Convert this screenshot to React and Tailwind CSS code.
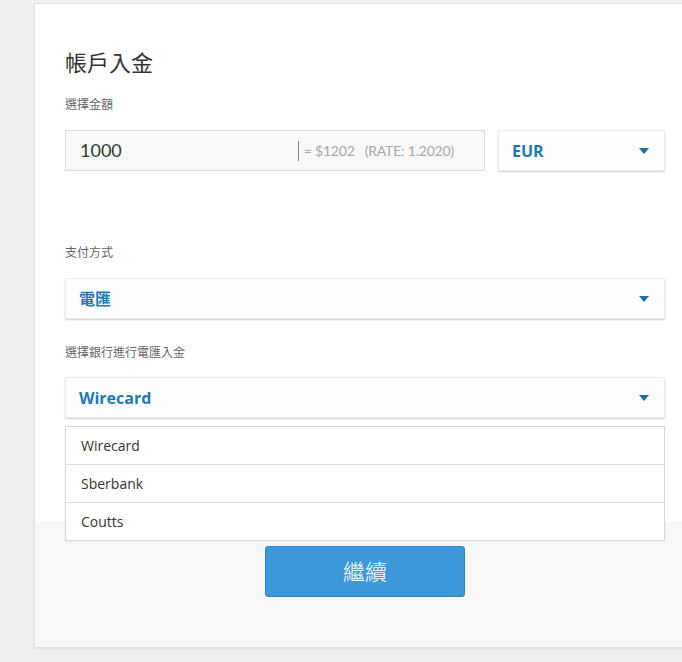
import { useState } from "react";

const sans = "font-['Open_Sans','Noto_Sans_CJK_TC',sans-serif]";

const Caret = () => (
  <svg width="10" height="6" viewBox="0 0 10 6" className="shrink-0">
    <path d="M0 0h10L5 6z" fill="#1c6fa3" />
  </svg>
);

const SelectBox = ({ value, className = "" }) => (
  <div className={`flex items-center justify-between h-[41px] pl-[13px] pr-[15px] bg-[#fdfdfd] border border-[#ececec] rounded-[2px] shadow-[0_1px_2px_rgba(0,0,0,0.2)] ${className}`}>
    <span className="text-[16px] font-bold text-[#1f79b5]">{value}</span>
    <Caret />
  </div>
);

const banks = ["Wirecard", "Sberbank", "Coutts"];

const App = () => {
  const [bank, setBank] = useState("Wirecard");

  return (
    <div className={`min-h-[662px] bg-[#efefef] pl-[34px] pt-[3px] overflow-hidden ${sans}`}>
      <div className="w-[662px] h-[645px] flex flex-col bg-white border border-[#e2e2e2] shadow-[0_1px_2px_rgba(0,0,0,0.08)]">
        <div className="h-[517px] px-[30px] pt-[43px]">
          <h1 className="text-[22px] leading-[30px] text-[#333] font-normal mb-[20px]">帳戶入金</h1>
          <div className="text-[12px] leading-[16px] text-[#666] mb-[17px]">選擇金額</div>
          <div className="flex gap-[13px]">
            <div className="flex items-center w-[420px] h-[41px] bg-[#f8f8f8] border border-[#dcdcdc] pl-[14px] pr-[30px]">
              <span className="text-[18px] text-[#2d3b34] font-['Lato',sans-serif] flex-1">1000</span>
              <span className="w-px h-[20px] bg-[#888] mr-[5px]" />
              <span className="text-[14px] tracking-[-0.2px] text-[#a9a9a9] font-['Lato',sans-serif] whitespace-pre">= $1202   (RATE: 1.2020)</span>
            </div>
            <SelectBox value="EUR" className="w-[167px]" />
          </div>

          <div className="text-[12px] leading-[16px] text-[#666] mt-[74px] mb-[17px]">支付方式</div>
          <SelectBox value="電匯" />

          <div className="text-[12px] leading-[16px] text-[#666] mt-[26px] mb-[16px]">選擇銀行進行電匯入金</div>
          <div className="relative">
            <SelectBox value={bank} />
            <ul className="absolute left-0 right-0 top-[49px] z-10 bg-white border border-[#d6d6d6] shadow-[0_1px_2px_rgba(0,0,0,0.06)]">
              {banks.map((b, i) => (
                <li
                  key={b}
                  onClick={() => setBank(b)}
                  className={`flex items-center pl-[15px] text-[14px] text-[#333] cursor-pointer ${i > 0 ? "h-[38px] border-t border-[#e2e2e2]" : "h-[37px]"}`}
                >
                  {b}
                </li>
              ))}
            </ul>
          </div>
        </div>

        <div className="flex-1 bg-[#f7f7f7] px-[30px] pt-[25px] flex justify-center">
          <button className="w-[200px] h-[51px] bg-[#3d98da] border border-[#3684bd] rounded-[3px] text-white text-[22px] font-light">
            繼續
          </button>
        </div>
      </div>
    </div>
  );
};

export default App;
